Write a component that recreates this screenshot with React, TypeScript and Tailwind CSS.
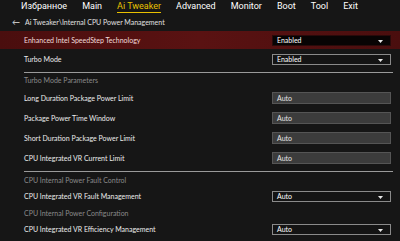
import React from "react";

const tabs = ["Избранное", "Main", "Ai Tweaker", "Advanced", "Monitor", "Boot", "Tool", "Exit"];

function Arrow() {
  return (
    <svg width="5" height="3" viewBox="0 0 5 3" className="absolute right-[7px] top-[4px]">
      <path d="M0 0 L5 0 L2.5 3 Z" fill="#e8e8e8" />
    </svg>
  );
}

function Select({ value, active }: { value: string; active?: boolean }) {
  return (
    <div
      className={
        "relative w-[119px] h-[11px] flex items-center pl-[4px] text-[7px] text-white " +
        (active ? "bg-[#080404] border border-[#2a0a0a]" : "bg-[#141414] border border-[#8a8a8a]")
      }
    >
      {value}
      <Arrow />
    </div>
  );
}

function Field({ value }: { value: string }) {
  return (
    <div className="w-[119px] h-[12px] flex items-center pl-[4px] text-[7px] text-[#e6e6e6] bg-[#3c3c3c] border border-[#555]">
      {value}
    </div>
  );
}

function Row({ label, h, children }: { label: string; h: string; children?: React.ReactNode }) {
  return (
    <div className={"flex items-center justify-between pl-[24px] pr-[9px] " + h}>
      <span className="text-[7px] text-[#ececec]">{label}</span>
      {children}
    </div>
  );
}

function Section({ label, h }: { label: string; h: string }) {
  return (
    <div className={"flex items-center pl-[24px] text-[7px] text-[#8a8a8a] " + h}>{label}</div>
  );
}

export default function App() {
  return (
    <div
      className="w-[400px] h-[241px] overflow-hidden bg-[#161616]"
      style={{ fontFamily: 'Lato, "Open Sans", sans-serif' }}
    >
      {/* верхнее меню */}
      <div
        className="flex h-[14px] items-start pl-[21px] gap-[15px] text-[9px] leading-[12px] text-white"
        style={{ fontFamily: 'Roboto, sans-serif' }}
      >
        {tabs.map((t) => (
          <span
            key={t}
            className={t === "Ai Tweaker" ? "text-[#e8c000] border-b border-[#e8c000]" : ""}
          >
            {t}
          </span>
        ))}
      </div>

      {/* путь */}
      <div className="flex items-center h-[16px] pl-[12px] gap-[5px] text-[7px] text-[#e0e0e0]">
        <span className="text-[8px]">←</span>
        <span>Ai Tweaker\Internal CPU Power Management</span>
      </div>

      <div className="h-[1px]" />
      <div className="flex items-center justify-between h-[18px] pl-[24px] pr-[9px] bg-gradient-to-r from-[#4a0e0e] via-[#5a1212] to-[#4a0e0e]">
        <span className="text-[7px] text-[#f2dcdc]">Enhanced Intel SpeedStep Technology</span>
        <Select value="Enabled" active />
      </div>

      <Row label="Turbo Mode" h="h-[21px]">
        <Select value="Enabled" />
      </Row>

      <div className="ml-[24px] mr-[7px] mt-[2px] h-[1px] bg-[#9a9a9a]" />

      <Section label="Turbo Mode Parameters" h="h-[15px]" />
      <Row label="Long Duration Package Power Limit" h="h-[20px]">
        <Field value="Auto" />
      </Row>
      <Row label="Package Power Time Window" h="h-[20px]">
        <Field value="Auto" />
      </Row>
      <Row label="Short Duration Package Power Limit" h="h-[20px]">
        <Field value="Auto" />
      </Row>
      <Row label="CPU Integrated VR Current Limit" h="h-[20px]">
        <Field value="Auto" />
      </Row>

      <div className="ml-[24px] mr-[7px] mt-[3px] h-[1px] bg-[#9a9a9a]" />

      <Section label="CPU Internal Power Fault Control" h="h-[16px]" />
      <Row label="CPU Integrated VR Fault Management" h="h-[17px]">
        <Select value="Auto" />
      </Row>
      <Section label="CPU Internal Power Configuration" h="h-[16px]" />
      <Row label="CPU Integrated VR Efficiency Management" h="h-[17px]">
        <Select value="Auto" />
      </Row>
    </div>
  );
}
